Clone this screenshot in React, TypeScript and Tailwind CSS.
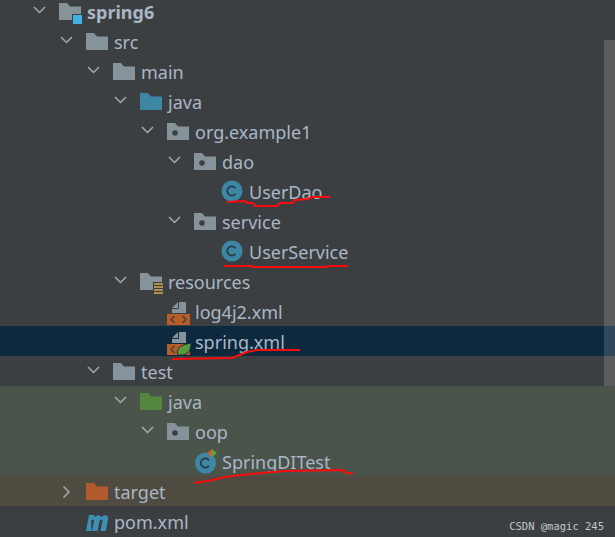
const rows: { depth: number; chev?: 'down' | 'right'; icon: string; text: string; bold?: boolean; bg?: string }[] = [
  { depth: 0, chev: 'down', icon: 'module', text: 'spring6', bold: true },
  { depth: 1, chev: 'down', icon: 'folder', text: 'src' },
  { depth: 2, chev: 'down', icon: 'folder', text: 'main' },
  { depth: 3, chev: 'down', icon: 'blue', text: 'java' },
  { depth: 4, chev: 'down', icon: 'pkg', text: 'org.example1' },
  { depth: 5, chev: 'down', icon: 'pkg', text: 'dao' },
  { depth: 6, icon: 'class', text: 'UserDao' },
  { depth: 5, chev: 'down', icon: 'pkg', text: 'service' },
  { depth: 6, icon: 'class', text: 'UserService' },
  { depth: 3, chev: 'down', icon: 'res', text: 'resources' },
  { depth: 4, icon: 'xml', text: 'log4j2.xml' },
  { depth: 4, icon: 'spring', text: 'spring.xml', bg: 'bg-[#0d293e]' },
  { depth: 2, chev: 'down', icon: 'folder', text: 'test' },
  { depth: 3, chev: 'down', icon: 'green', text: 'java', bg: 'bg-[#4a544b]' },
  { depth: 4, chev: 'down', icon: 'pkg', text: 'oop', bg: 'bg-[#4a544b]' },
  { depth: 5, icon: 'test', text: 'SpringDITest', bg: 'bg-[#4a544b]' },
  { depth: 1, chev: 'right', icon: 'orange', text: 'target', bg: 'bg-[#4f4b41]' },
  { depth: 1, icon: 'pom', text: 'pom.xml' },
];

const FOLDER = 'M0 4h8l3 3.500h11V21H0z';

function Icon({ kind }: { kind: string }) {
  const fill: Record<string, string> = { folder: '#87939a', module: '#87939a', res: '#87939a', pkg: '#87939a', blue: '#3d87a5', green: '#53873f', orange: '#b05a2e' };
  return (
    <svg width="24" height="24" viewBox="0 0 24 24" className="shrink-0 overflow-visible">
      {fill[kind] && <path d={FOLDER} fill={fill[kind]} />}
      {kind === 'pkg' && <circle cx="8" cy="14" r="2.800" fill="#3c3f41" />}
      {kind === 'module' && (
        <g>
          <rect x="13" y="15" width="11" height="11" fill="#3c3f41" />
          <rect x="14" y="16" width="9" height="9" fill="#3fb4e4" />
        </g>
      )}
      {kind === 'res' && (
        <g>
          <rect x="13" y="13" width="11" height="13" fill="#3c3f41" />
          <path d="M14 15h9M14 18h9M14 21h9M14 24h9" stroke="#d8a94c" strokeWidth="1.600" />
        </g>
      )}
      {kind === 'class' && (
        <g>
          <circle cx="11" cy="12" r="10.500" fill="#3d87a5" />
          <path d="M14.500 9.200a4.600 4.600 0 1 0 0 5.600" fill="none" stroke="#2b3a42" strokeWidth="1.700" />
        </g>
      )}
      {kind === 'test' && (
        <g>
          <circle cx="11.500" cy="14" r="10.500" fill="#3d87a5" />
          <path d="M15 11.200a4.600 4.600 0 1 0 0 5.600" fill="none" stroke="#2b3a42" strokeWidth="1.700" />
          <path d="M18 0l-4.500 4 4.500 4.500z" fill="#d0642e" />
          <path d="M18 0l5 4-5 4.500z" fill="#55a53f" />
        </g>
      )}
      {(kind === 'xml' || kind === 'spring') && (
        <g>
          <path d="M11 3h8v11H5V9z" fill="#87939a" />
          <path d="M11.500 3v6.500H5" fill="none" stroke={kind === 'spring' ? '#0d293e' : '#3c3f41'} strokeWidth="1" />
          <rect x="0" y="15" width="23" height="11" fill="#b85c2a" />
          <path d="M7.500 17l-3.500 3.500 3.500 3.500" fill="none" stroke="#3c3f41" strokeWidth="1.400" />
          {kind === 'xml' && <path d="M15.500 17l3.500 3.500-3.500 3.500" fill="none" stroke="#3c3f41" strokeWidth="1.400" />}
        </g>
      )}
      {kind === 'spring' && <path d="M10.500 25c-1-6 4-9.500 13.500-11 0 7-3 12-9 12-2 0-3.500 0-4.500-1z" fill="#5b9a3c" stroke="#0d293e" strokeWidth="1" />}
      {kind === 'pom' && <path d="M0 22L3 6h5.500l-.4 2.500c2-2.500 6-3.500 7-.2 2-2.500 7.500-3.500 7 1.500L20 22h-5.500l2-10c.3-2-2-2-3 0L11.500 22H6l2-10c.3-2-2-2-3 0L5.500 22z" fill="#3d8fb5" />}
    </svg>
  );
}

function Chevron({ dir }: { dir: 'down' | 'right' }) {
  return (
    <svg width="14" height="14" viewBox="0 0 14 14" className="shrink-0">
      <path d={dir === 'down' ? 'M1 3l5.500 5.500L12 3' : 'M3.500 2.500L9 8l-5.500 5.500'} fill="none" stroke="#a5a9ab" strokeWidth="1.500" />
    </svg>
  );
}

const indent = ['pl-[33px]', 'pl-[60px]', 'pl-[87px]', 'pl-[114px]', 'pl-[141px]', 'pl-[168px]', 'pl-[195px]'];

export default function App() {
  return (
    <div className="relative h-[537px] w-[615px] overflow-hidden bg-[#3c3f41] font-['Noto_Sans',sans-serif] text-[18px] text-[#a9b7c6]">
      <div className="-mt-[4px] flex flex-col">
        {rows.map((r, i) => (
          <div key={i} className={`flex h-[30px] items-center ${indent[r.depth]} ${r.bg ?? ''}`}>
            <div className="flex w-[26px] shrink-0 justify-start">{r.chev && <Chevron dir={r.chev} />}</div>
            <Icon kind={r.icon} />
            <span className={`ml-[4px] pt-[2px] leading-none ${r.bold ? 'font-bold' : ''}`}>{r.text}</span>
          </div>
        ))}
      </div>
      <div className="absolute right-0 top-[40px] h-[346px] w-[11px] bg-white/15" />
      <span className="absolute bottom-[6px] right-[11px] font-['DejaVu_Sans_Mono',monospace] text-[10.5px] leading-none text-[#c4c6c8]">CSDN @magic 245</span>
      <svg width="615" height="537" className="pointer-events-none absolute left-0 top-0" fill="none" stroke="#f80c0c" strokeWidth="2">
        <path d="M227 202L245 201 247 203 253 203 255 206 277 206 280 203 292 203 295 200 308 199 312 197 330 197" />
        <path d="M224 266L252 266 253 267 327 267 328 266 348 266" />
        <path d="M172 359L232 358 247 352 257 350 300 350" />
        <path d="M194 483L208 481 225 477 250 474 285 471 343 470 346 473 353 473" />
      </svg>
    </div>
  );
}
